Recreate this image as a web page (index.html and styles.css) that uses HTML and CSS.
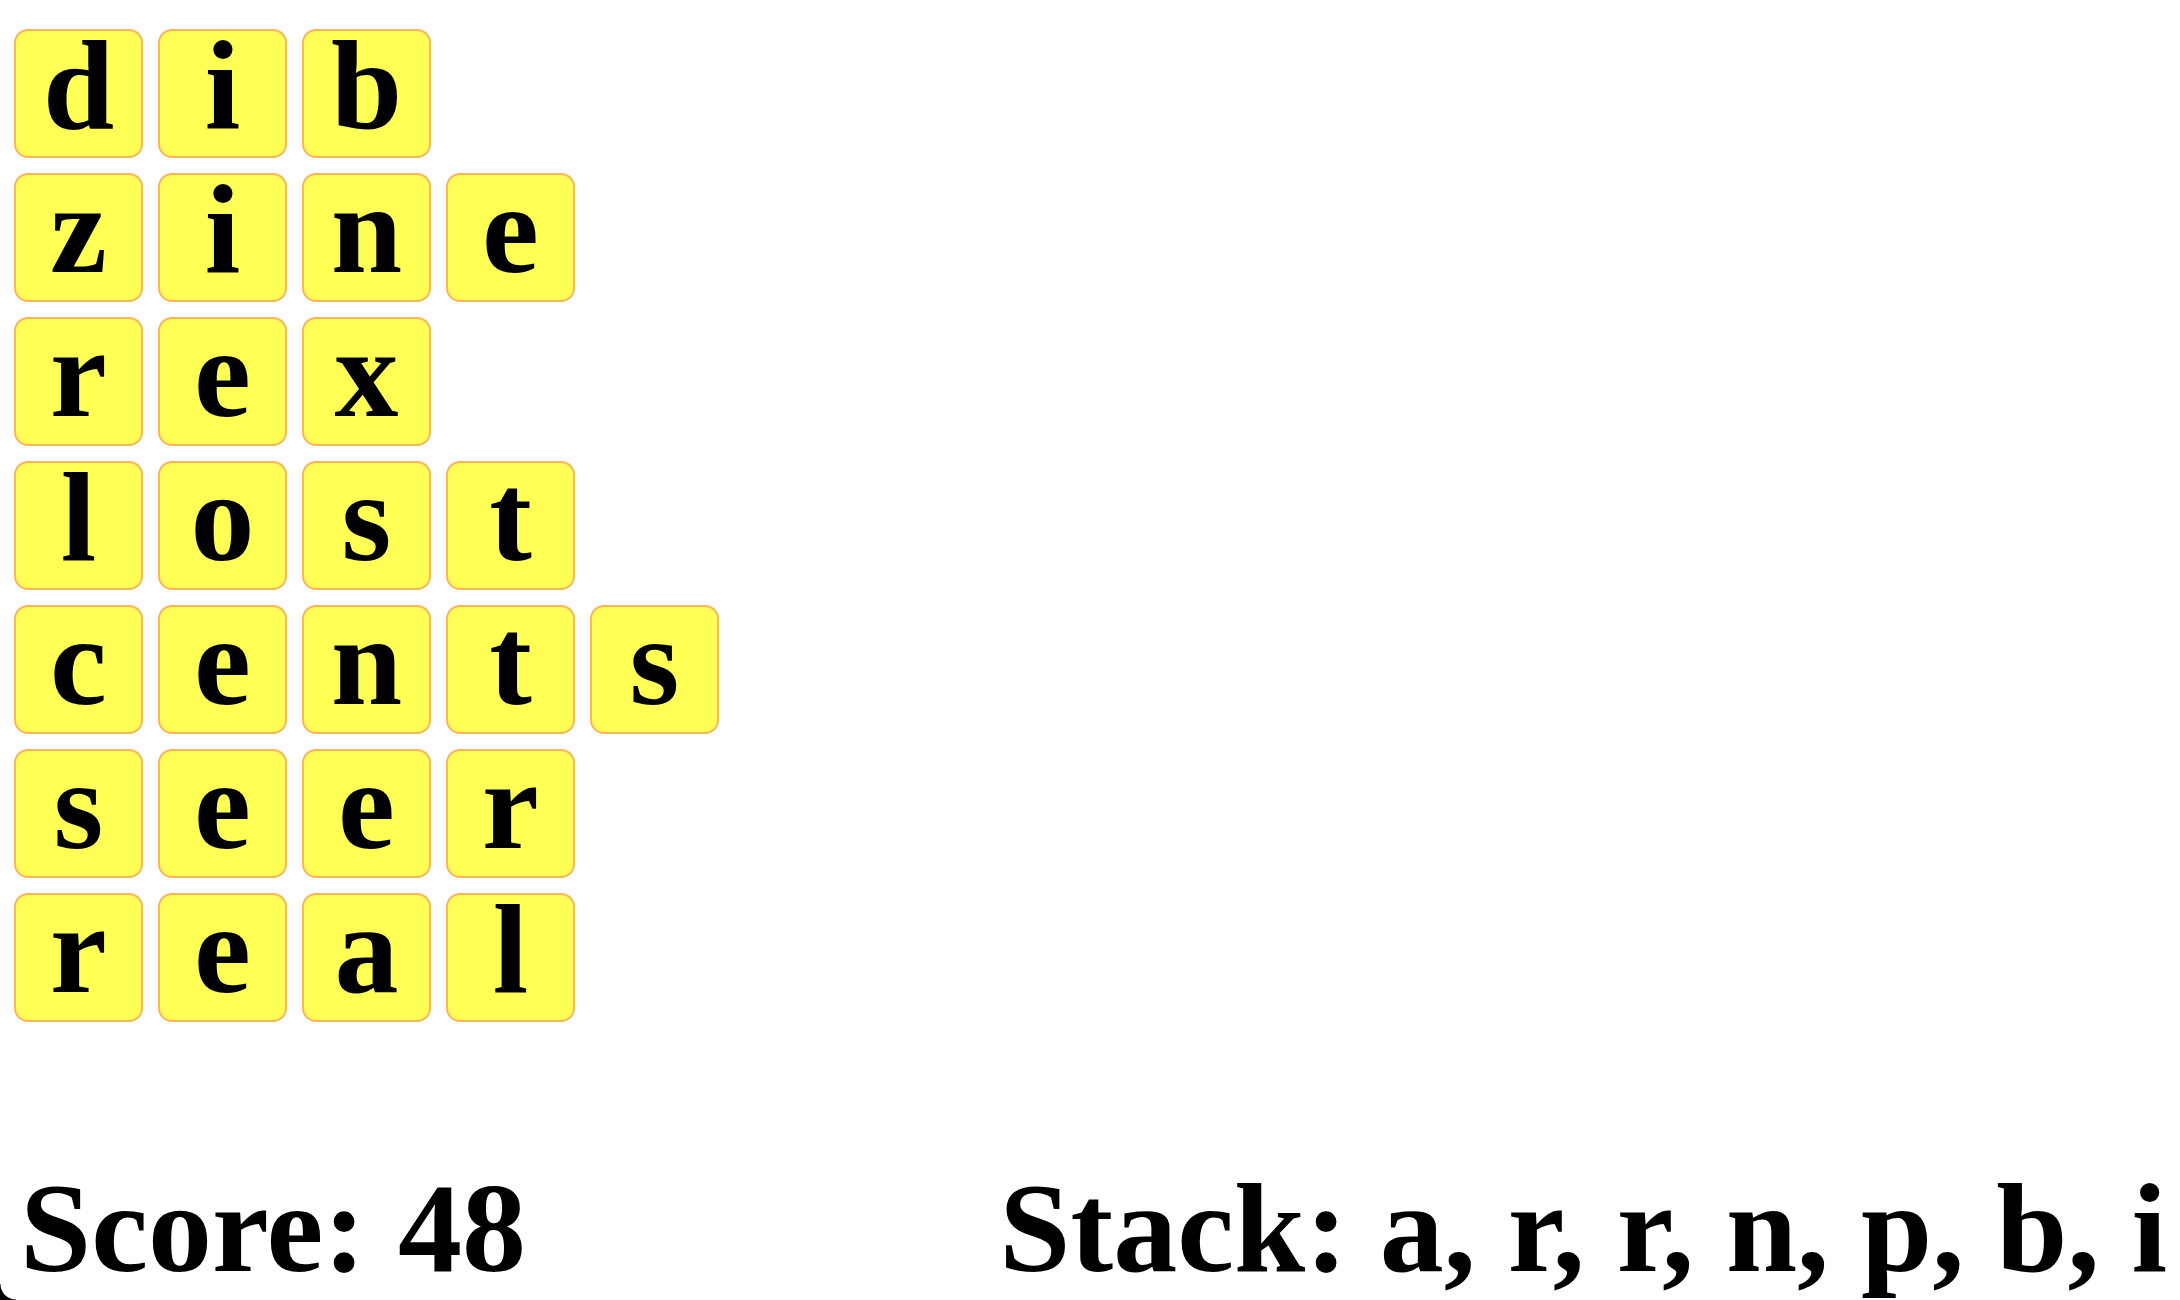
FILE: index.html
```html
<!DOCTYPE html>
<html lang="en">
<head>
  <meta charset="UTF-8" />
  <title>Word Stack</title>
  <link rel="stylesheet" href="styles.css">
</head>
<body>
  <div class="board">
    <div class="word">
      <div class="tile">d</div><div class="tile">i</div><div class="tile">b</div>
    </div>
    <div class="word">
      <div class="tile">z</div><div class="tile">i</div><div class="tile">n</div><div class="tile">e</div>
    </div>
    <div class="word">
      <div class="tile">r</div><div class="tile">e</div><div class="tile">x</div>
    </div>
    <div class="word">
      <div class="tile">l</div><div class="tile">o</div><div class="tile">s</div><div class="tile">t</div>
    </div>
    <div class="word">
      <div class="tile">c</div><div class="tile">e</div><div class="tile">n</div><div class="tile">t</div><div class="tile">s</div>
    </div>
    <div class="word">
      <div class="tile">s</div><div class="tile">e</div><div class="tile">e</div><div class="tile">r</div>
    </div>
    <div class="word">
      <div class="tile">r</div><div class="tile">e</div><div class="tile">a</div><div class="tile">l</div>
    </div>
  </div>

  <div class="status">
    <div class="score">Score: 48</div>
    <div class="stack">Stack: a, r, r, n, p, b, i</div>
  </div>
</body>
</html>
```

FILE: styles.css
```css
:root {
  --tile-bg: #ffff55;
  --tile-border: #f9b65c;
  --ink: #000;
}

html {
  overflow: hidden;
}

body {
  margin: 0;
  background: #fff;
  color: var(--ink);
  font-family: 'Liberation Serif', 'Times New Roman', serif;
  font-weight: 700;
  font-size: 128px;
}

/* window corner from the original screenshot */
body::after {
  content: '';
  position: fixed;
  left: 0;
  bottom: 0;
  width: 16px;
  height: 16px;
  background: radial-gradient(circle at 100% 0, transparent 15px, #000 16px);
}

.board {
  display: flex;
  flex-direction: column;
  gap: 15px;
  padding: 29px 0 0 14px;
}

.word {
  display: flex;
  gap: 15px;
}

.tile {
  box-sizing: border-box;
  width: 129px;
  height: 129px;
  display: flex;
  justify-content: center;
  align-items: flex-start;
  line-height: 108px;
  background: var(--tile-bg);
  border: 2px solid var(--tile-border);
  border-radius: 14px;
}

.status {
  display: flex;
  justify-content: space-between;
  margin-top: 133px;
  padding: 0 13px 0 20px;
  line-height: 1.15;
}
```
